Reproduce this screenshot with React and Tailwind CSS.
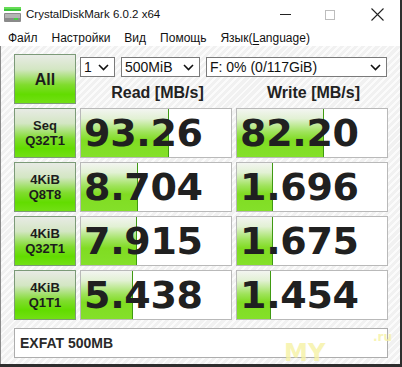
import { useState } from 'react'

const ROWS = [
  { top: 'Seq', bottom: 'Q32T1', read: '93.26', write: '82.20', rw: 88, ww: 87 },
  { top: '4KiB', bottom: 'Q8T8', read: '8.704', write: '1.696', rw: 57, ww: 36 },
  { top: '4KiB', bottom: 'Q32T1', read: '7.915', write: '1.675', rw: 56, ww: 36 },
  { top: '4KiB', bottom: 'Q1T1', read: '5.438', write: '1.454', rw: 52, ww: 34 },
]

const MENU = ['Файл', 'Настройки', 'Вид', 'Помощь', 'Язык(Language)']

function Chevron() {
  return (
    <svg width="11" height="7" viewBox="0 0 11 7" className="shrink-0">
      <path d="M1 1l4.5 4.5L10 1" fill="none" stroke="#111" strokeWidth="1.6" />
    </svg>
  )
}

function Select({ value, className }) {
  return (
    <div className={`flex h-[20px] items-center justify-between border border-[#7a7a7a] bg-white pl-[3px] pr-[5px] text-[14px] text-[#111] ${className}`}>
      <span className="leading-none">{value}</span>
      <Chevron />
    </div>
  )
}

function GreenButton({ children, className = '' }) {
  return (
    <button
      type="button"
      className={`flex h-[50px] w-[62px] shrink-0 flex-col items-center justify-center border border-[#7c9a78] bg-[linear-gradient(to_bottom,#e8ebe5_0%,#d3e6c3_30%,#80dc2e_62%,#62dc00_82%,#72e014_100%)] font-bold leading-[15px] text-[#1c1c1c] ${className}`}
    >
      {children}
    </button>
  )
}

function Cell({ value, fill }) {
  return (
    <div className="relative flex h-[50px] w-[152px] items-center border border-[#b9b9b9] bg-white">
      <div
        className="absolute bottom-0 left-0 top-0 border-r border-[#3f9a12] bg-[linear-gradient(to_bottom,#f3f5f1_0%,#e2f1d4_20%,#9ee35a_48%,#80dc22_65%,#84e02a_100%)]"
        style={{ width: fill }}
      />
      <span className="relative pl-[3px] font-['DejaVu_Sans',sans-serif] text-[38px] font-bold leading-none tracking-[-0.3px] text-[#202020]">
        {value}
      </span>
    </div>
  )
}

export default function App() {
  const [comment] = useState('EXFAT 500MB')

  return (
    <div className="relative h-[367px] w-[402px] overflow-hidden bg-[#2e2e2e] font-['Liberation_Sans',sans-serif]">
      <div className="flex h-[364px] w-[400px] flex-col bg-white">
        {/* title bar */}
        <div className="flex h-[29px] items-center">
          <svg width="17" height="15" viewBox="0 0 17 15" className="ml-[4px]">
            <rect x="0" y="0" width="17" height="4" fill="#3cc43c" />
            <rect x="0" y="0" width="17" height="2" fill="#66dd55" />
            <rect x="0" y="6" width="17" height="9" rx="1" fill="#8a8a8a" />
            <rect x="1" y="7" width="15" height="4" fill="#b4b4b4" />
            <rect x="10" y="11" width="4" height="2" fill="#46d046" />
          </svg>
          <span className="ml-[5px] text-[11.5px] text-[#111]">CrystalDiskMark 6.0.2 x64</span>
          <div className="ml-auto flex items-center">
            <div className="mr-[34px] h-px w-[11px] bg-[#222]" />
            <div className="mr-[36px] h-[10px] w-[10px] border border-[#bdbdbd]" />
            <svg width="13" height="13" viewBox="0 0 13 13" className="mr-[16px]">
              <path d="M0.5 0.5l12 12M12.5 0.5l-12 12" stroke="#222" strokeWidth="1.1" />
            </svg>
          </div>
        </div>

        {/* menu */}
        <div className="flex h-[17px] items-center gap-[14px] pl-[8px] text-[12px] text-[#111]">
          {MENU.map((m) => (
            <span key={m} className="leading-none">
              {m === 'Язык(Language)' ? (
                <>Язык(<span className="underline underline-offset-2">L</span>anguage)</>
              ) : m}
            </span>
          ))}
        </div>

        {/* content */}
        <div className="relative flex flex-1 flex-col border-l border-[#8a8a8a] bg-[repeating-linear-gradient(135deg,#f1f1f1_0px,#f1f1f1_3px,#fbfbfb_3px,#fbfbfb_5px)] pl-[13px] pt-[8px]">
          <div className="flex h-[50px] gap-[4px]">
            <GreenButton className="text-[16px]">All</GreenButton>
            <div className="flex flex-col">
              <div className="mt-[3px] flex gap-[6px]">
                <Select value="1" className="w-[35px]" />
                <Select value="500MiB" className="w-[79px]" />
                <Select value="F: 0% (0/117GiB)" className="w-[181px]" />
              </div>
              <div className="mt-[7px] flex gap-[4px] text-[16px] font-bold leading-[18px] text-[#222]">
                <div className="w-[152px] pl-[3px] text-center">Read [MB/s]</div>
                <div className="w-[152px] pl-[3px] text-center">Write [MB/s]</div>
              </div>
            </div>
          </div>

          <div className="mt-[4px] flex flex-col gap-[4px]">
            {ROWS.map((r) => (
              <div key={r.read} className="flex gap-[4px]">
                <GreenButton className="text-[13px]">
                  <span>{r.top}</span>
                  <span>{r.bottom}</span>
                </GreenButton>
                <Cell value={r.read} fill={r.rw} />
                <Cell value={r.write} fill={r.ww} />
              </div>
            ))}
          </div>

          <div className="mt-[8px] flex h-[30px] w-[374px] items-center border border-[#adadad] bg-white pl-[5px] text-[14px] font-bold text-[#2a2a2a]">
            {comment}
          </div>

          {/* watermark */}
          <span className="absolute left-[283px] top-[295px] font-['DejaVu_Sans',sans-serif] text-[24px] font-bold leading-none text-[#f6f2a4] opacity-80">MY</span>
          <span className="absolute left-[372px] top-[285px] font-['DejaVu_Sans',sans-serif] text-[12px] font-bold leading-none text-[#f6f2a4] opacity-80">.ru</span>
        </div>
      </div>
    </div>
  )
}
